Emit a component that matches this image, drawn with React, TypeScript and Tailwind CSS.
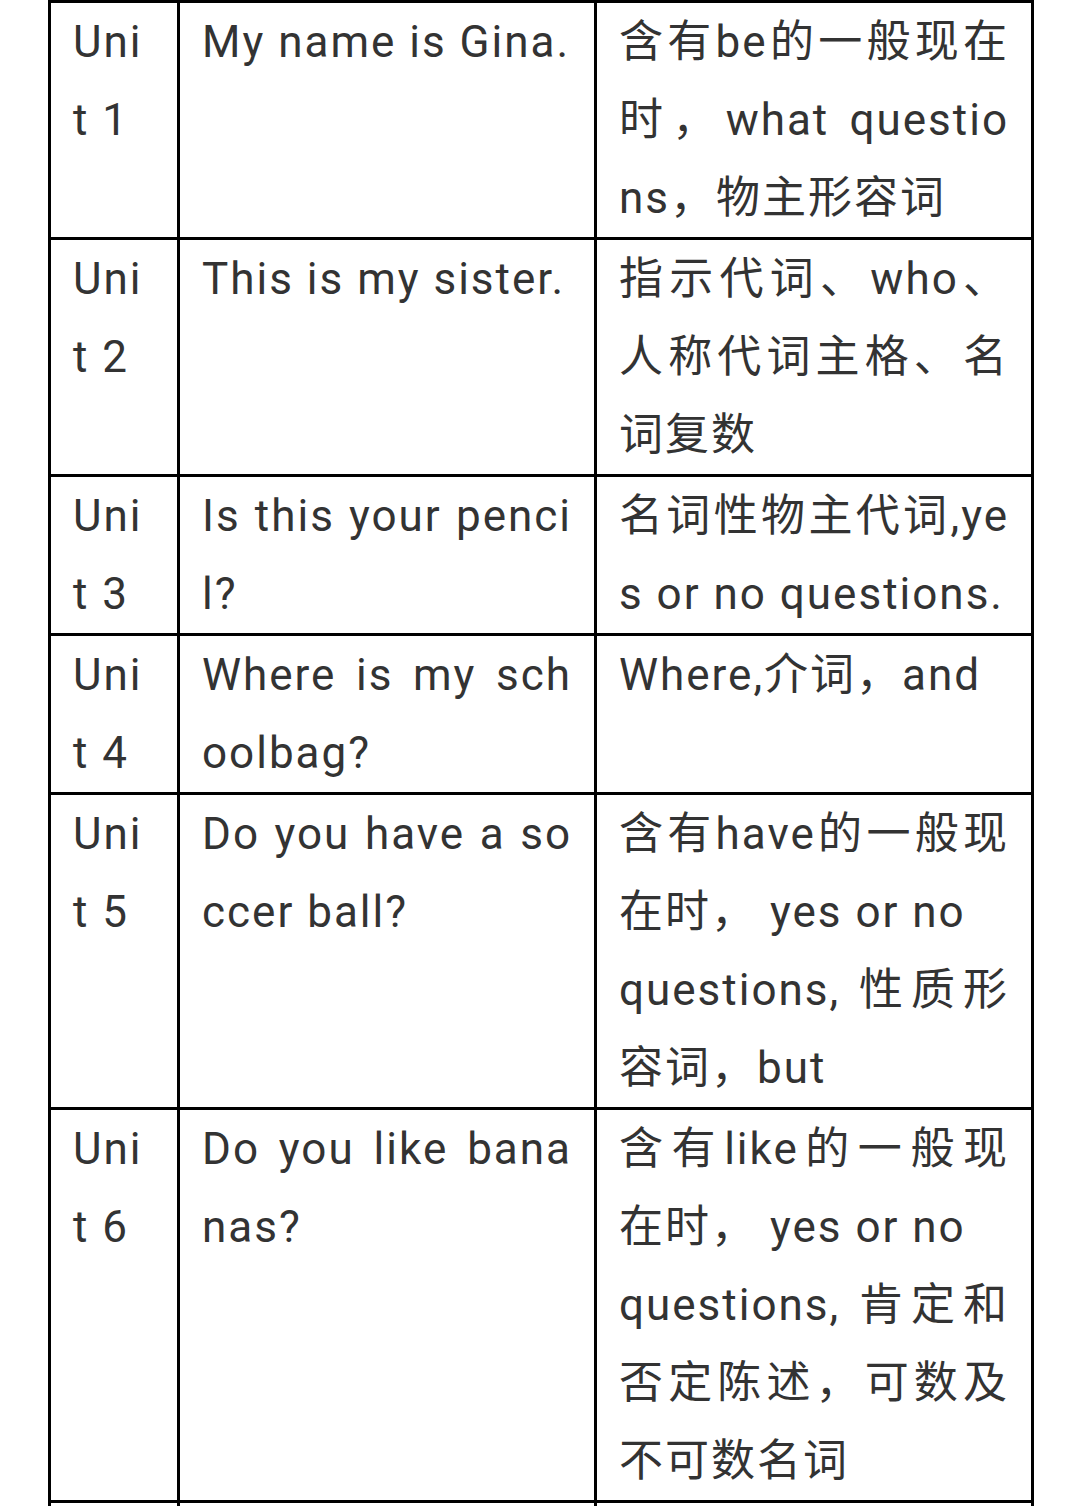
import { ReactNode } from "react"

interface Row {
  unit: string
  title: string
  grammar: ReactNode
}

const rows: Row[] = [
  {
    unit: "Unit 1",
    title: "My name is Gina.",
    grammar: "含有be的一般现在时，what questions，物主形容词",
  },
  {
    unit: "Unit 2",
    title: "This is my sister.",
    grammar: "指示代词、who、人称代词主格、名词复数",
  },
  {
    unit: "Unit 3",
    title: "Is this your pencil?",
    grammar: "名词性物主代词,yes or no questions.",
  },
  {
    unit: "Unit 4",
    title: "Where is my schoolbag?",
    grammar: "Where,介词，and",
  },
  {
    unit: "Unit 5",
    title: "Do you have a soccer ball?",
    grammar: (
      <>
        含有have的一般现在时， yes or no
        <br />
        questions, 性质形容词，but
      </>
    ),
  },
  {
    unit: "Unit 6",
    title: "Do you like bananas?",
    grammar: (
      <>
        含有like的一般现在时， yes or no
        <br />
        questions, 肯定和否定陈述，可数及不可数名词
      </>
    ),
  },
]

const cell =
  "border-[3px] border-black px-[22px] py-0 align-top text-justify break-all"

export default function App() {
  return (
    <div className="h-[1506px] overflow-hidden bg-white pl-[48px]">
      <table
        className="table-fixed border-collapse w-[983px] text-[44px] leading-[78px] tracking-[2px] text-[#333333]"
        style={{ fontFamily: 'Roboto, "Noto Sans CJK SC", sans-serif' }}
      >
        <colgroup>
          <col className="w-[129px]" />
          <col className="w-[417px]" />
          <col className="w-[437px]" />
        </colgroup>
        <tbody>
          {rows.map((row) => (
            <tr key={row.unit}>
              <td className={cell}>{row.unit}</td>
              <td className={cell}>{row.title}</td>
              <td className={cell}>{row.grammar}</td>
            </tr>
          ))}
          {/* next row, only its top edge shows */}
          <tr className="h-[78px]">
            <td className={cell}></td>
            <td className={cell}></td>
            <td className={cell}></td>
          </tr>
        </tbody>
      </table>
    </div>
  )
}
